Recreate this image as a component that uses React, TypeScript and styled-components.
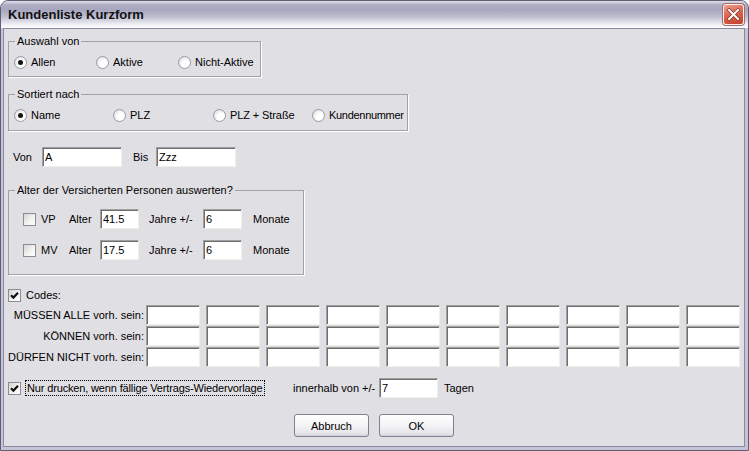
import { createGlobalStyle, styled } from "styled-components";

const GlobalStyle = createGlobalStyle`
  body {
    margin: 0;
    background: #ffffff;
  }
  * {
    box-sizing: border-box;
  }
`;

const Window = styled.div`
  width: 749px;
  height: 451px;
  display: flex;
  flex-direction: column;
  border: 1px solid #5e5e76;
  border-radius: 8px 8px 0 0;
  overflow: hidden;
  background: #c4c4d4;
  font-family: "Liberation Sans", Arial, sans-serif;
  font-size: 11px;
  color: #000;
`;

const TitleBar = styled.div`
  height: 27px;
  flex-shrink: 0;
  display: flex;
  align-items: center;
  justify-content: space-between;
  padding: 0 4px 0 7px;
  background: linear-gradient(
    to bottom,
    #e2e2ec 0%,
    #aeaec4 14%,
    #a6a6be 32%,
    #c0c0d2 60%,
    #f1f1f6 88%,
    #fdfdff 100%
  );
`;

const Title = styled.span`
  font-size: 13px;
  font-weight: bold;
  color: #111;
`;

const CloseButton = styled.div`
  width: 21px;
  height: 21px;
  border-radius: 3px;
  border: 1px solid #f4f0f0;
  box-shadow: 0 0 0 1px #a86a6a;
  background: linear-gradient(160deg, #ef9f8e 0%, #dc6650 45%, #c3412b 100%);
  display: flex;
  align-items: center;
  justify-content: center;
`;

const Frame = styled.div`
  flex: 1;
  display: flex;
  padding: 0 3px 3px 2px;
`;

const Body = styled.div`
  flex: 1;
  display: flex;
  flex-direction: column;
  align-items: flex-start;
  border: 1px solid #8a8aa2;
  background: #e0dfe3;
  padding: 6px 4px 0 4px;
`;

const Group = styled.fieldset<{ $w: number; $mt?: number; $pt: number; $pb: number; $gap?: number }>`
  width: ${(p) => p.$w}px;
  margin: ${(p) => p.$mt ?? 0}px 0 0 0;
  padding: ${(p) => p.$pt}px 0 ${(p) => p.$pb}px 0;
  border: 1px solid #a2a2a6;
  box-shadow: 1px 1px 0 #ffffff;
  min-inline-size: 0;
  display: flex;
  flex-direction: column;
  gap: ${(p) => p.$gap ?? 0}px;
`;

const Legend = styled.legend`
  padding: 0 2px;
  margin-left: 6px;
  line-height: 13px;
`;

const Row = styled.div<{ $pl?: number; $mt?: number }>`
  display: flex;
  align-items: center;
  height: 20px;
  padding-left: ${(p) => p.$pl ?? 0}px;
  margin-top: ${(p) => p.$mt ?? 0}px;
  white-space: nowrap;
`;

const RadioItem = styled.label<{ $w: number }>`
  width: ${(p) => p.$w}px;
  display: flex;
  align-items: center;
  gap: 4px;
`;

const Radio = styled.span<{ $on?: boolean }>`
  width: 13px;
  height: 13px;
  flex-shrink: 0;
  border-radius: 50%;
  border: 1px solid #9a9aa4;
  background: radial-gradient(circle at 65% 65%, #ffffff 0%, #ffffff 35%, #d4d4d8 100%);
  display: flex;
  align-items: center;
  justify-content: center;

  &::after {
    content: "";
    display: ${(p) => (p.$on ? "block" : "none")};
    width: 5px;
    height: 5px;
    border-radius: 50%;
    background: #151515;
  }
`;

const Box = styled.span`
  width: 13px;
  height: 13px;
  flex-shrink: 0;
  border: 1px solid #8c8c98;
  background: linear-gradient(135deg, #d4d4d0 0%, #f2f2ee 55%, #ffffff 100%);
  display: flex;
  align-items: center;
  justify-content: center;
`;

const Text = styled.span<{ $w?: number; $ml?: number; $ls?: number }>`
  width: ${(p) => (p.$w ? `${p.$w}px` : "auto")};
  margin-left: ${(p) => p.$ml ?? 0}px;
  letter-spacing: ${(p) => p.$ls ?? 0}px;
  flex-shrink: 0;
`;

const Field = styled.input<{ $w: number; $ml?: number }>`
  width: ${(p) => p.$w}px;
  height: 20px;
  margin: 0 0 0 ${(p) => p.$ml ?? 0}px;
  padding: 0 2px;
  flex-shrink: 0;
  border-style: solid;
  border-width: 1px;
  border-color: #a0a0a0 #f0efe8 #f0efe8 #a0a0a0;
  box-shadow: inset 1px 1px 0 #6e6e6e;
  background: #ffffff;
  font-family: "Liberation Sans", Arial, sans-serif;
  font-size: 11px;
  color: #000;
  outline: none;
`;

const CodeRows = styled.div`
  display: flex;
  flex-direction: column;
  gap: 1px;
`;

const CodeLabel = styled.span`
  width: 138px;
  padding-right: 2px;
  text-align: right;
  flex-shrink: 0;
`;

const CodeFields = styled.div`
  display: flex;
  gap: 6px;
`;

const CheckLead = styled.div`
  width: 285px;
  display: flex;
  align-items: center;
  gap: 4px;
`;

const FocusLabel = styled.span`
  border: 1px dotted #000;
  padding: 0 1px;
  line-height: 14px;
  letter-spacing: -0.15px;
`;

const ButtonRow = styled.div`
  align-self: stretch;
  display: flex;
  justify-content: center;
  gap: 10px;
  margin-top: 16px;
`;

const Button = styled.button`
  width: 75px;
  height: 23px;
  padding: 0;
  border: 1px solid #80808e;
  border-radius: 3px;
  background: linear-gradient(#ffffff 0%, #f4f4f6 50%, #e4e4ea 88%, #d0d0da 100%);
  font-family: "Liberation Sans", Arial, sans-serif;
  font-size: 11px;
  color: #000;
`;

const Check = () => (
  <svg width="9" height="9" viewBox="0 0 9 9">
    <path d="M1 4.2 L3.4 6.6 L8 1.8" fill="none" stroke="#111" strokeWidth="2.2" />
  </svg>
);

const codeRows = ["MÜSSEN ALLE vorh. sein:", "KÖNNEN vorh. sein:", "DÜRFEN NICHT vorh. sein:"];

function App() {
  return (
    <>
      <GlobalStyle />
      <Window>
        <TitleBar>
          <Title>Kundenliste Kurzform</Title>
          <CloseButton>
            <svg width="13" height="13" viewBox="0 0 13 13">
              <path d="M2 2 L11 11 M11 2 L2 11" stroke="#7a2a20" strokeWidth="3.2" strokeLinecap="square" />
              <path d="M2 2 L11 11 M11 2 L2 11" stroke="#ffffff" strokeWidth="2" strokeLinecap="square" />
            </svg>
          </CloseButton>
        </TitleBar>
        <Frame>
          <Body>
            <Group $w={253} $pt={4} $pb={4}>
              <Legend>Auswahl von</Legend>
              <Row $pl={5}>
                <RadioItem $w={83}>
                  <Radio $on />
                  Allen
                </RadioItem>
                <RadioItem $w={83}>
                  <Radio />
                  Aktive
                </RadioItem>
                <RadioItem $w={83}>
                  <Radio />
                  Nicht-Aktive
                </RadioItem>
              </Row>
            </Group>

            <Group $w={400} $mt={11} $pt={4} $pb={5}>
              <Legend>Sortiert nach</Legend>
              <Row $pl={5}>
                <RadioItem $w={99}>
                  <Radio $on />
                  Name
                </RadioItem>
                <RadioItem $w={100}>
                  <Radio />
                  PLZ
                </RadioItem>
                <RadioItem $w={99}>
                  <Radio />
                  <Text $ls={-0.1}>PLZ + Straße</Text>
                </RadioItem>
                <RadioItem $w={90}>
                  <Radio />
                  <Text $ls={-0.3}>Kundennummer</Text>
                </RadioItem>
              </Row>
            </Group>

            <Row $pl={5} $mt={16}>
              <Text $w={29}>Von</Text>
              <Field $w={80} defaultValue="A" readOnly />
              <Text $w={23} $ml={11}>
                Bis
              </Text>
              <Field $w={80} defaultValue="Zzz" readOnly />
            </Row>

            <Group $w={296} $mt={17} $pt={12} $pb={14} $gap={11}>
              <Legend>Alter der Versicherten Personen auswerten?</Legend>
              {[
                { who: "VP", age: "41.5" },
                { who: "MV", age: "17.5" },
              ].map((r) => (
                <Row key={r.who} $pl={14}>
                  <Box />
                  <Text $w={28} $ml={5}>
                    {r.who}
                  </Text>
                  <Text $w={31}>Alter</Text>
                  <Field $w={39} defaultValue={r.age} readOnly />
                  <Text $w={54} $ml={10}>
                    Jahre +/-
                  </Text>
                  <Field $w={39} defaultValue="6" readOnly />
                  <Text $ml={11}>Monate</Text>
                </Row>
              ))}
            </Group>

            <Row $mt={10}>
              <Box>
                <Check />
              </Box>
              <Text $ml={5}>Codes:</Text>
            </Row>
            <CodeRows>
              {codeRows.map((label) => (
                <Row key={label}>
                  <CodeLabel>{label}</CodeLabel>
                  <CodeFields>
                    {Array.from({ length: 10 }, (_, i) => (
                      <Field key={i} $w={54} defaultValue="" readOnly />
                    ))}
                  </CodeFields>
                </Row>
              ))}
            </CodeRows>

            <Row $mt={11}>
              <CheckLead>
                <Box>
                  <Check />
                </Box>
                <FocusLabel>Nur drucken, wenn fällige Vertrags-Wiedervorlage</FocusLabel>
              </CheckLead>
              <Text $w={86}>innerhalb von +/-</Text>
              <Field $w={59} defaultValue="7" readOnly />
              <Text $ml={6}>Tagen</Text>
            </Row>

            <ButtonRow>
              <Button>Abbruch</Button>
              <Button>OK</Button>
            </ButtonRow>
          </Body>
        </Frame>
      </Window>
    </>
  );
}

export default App;
